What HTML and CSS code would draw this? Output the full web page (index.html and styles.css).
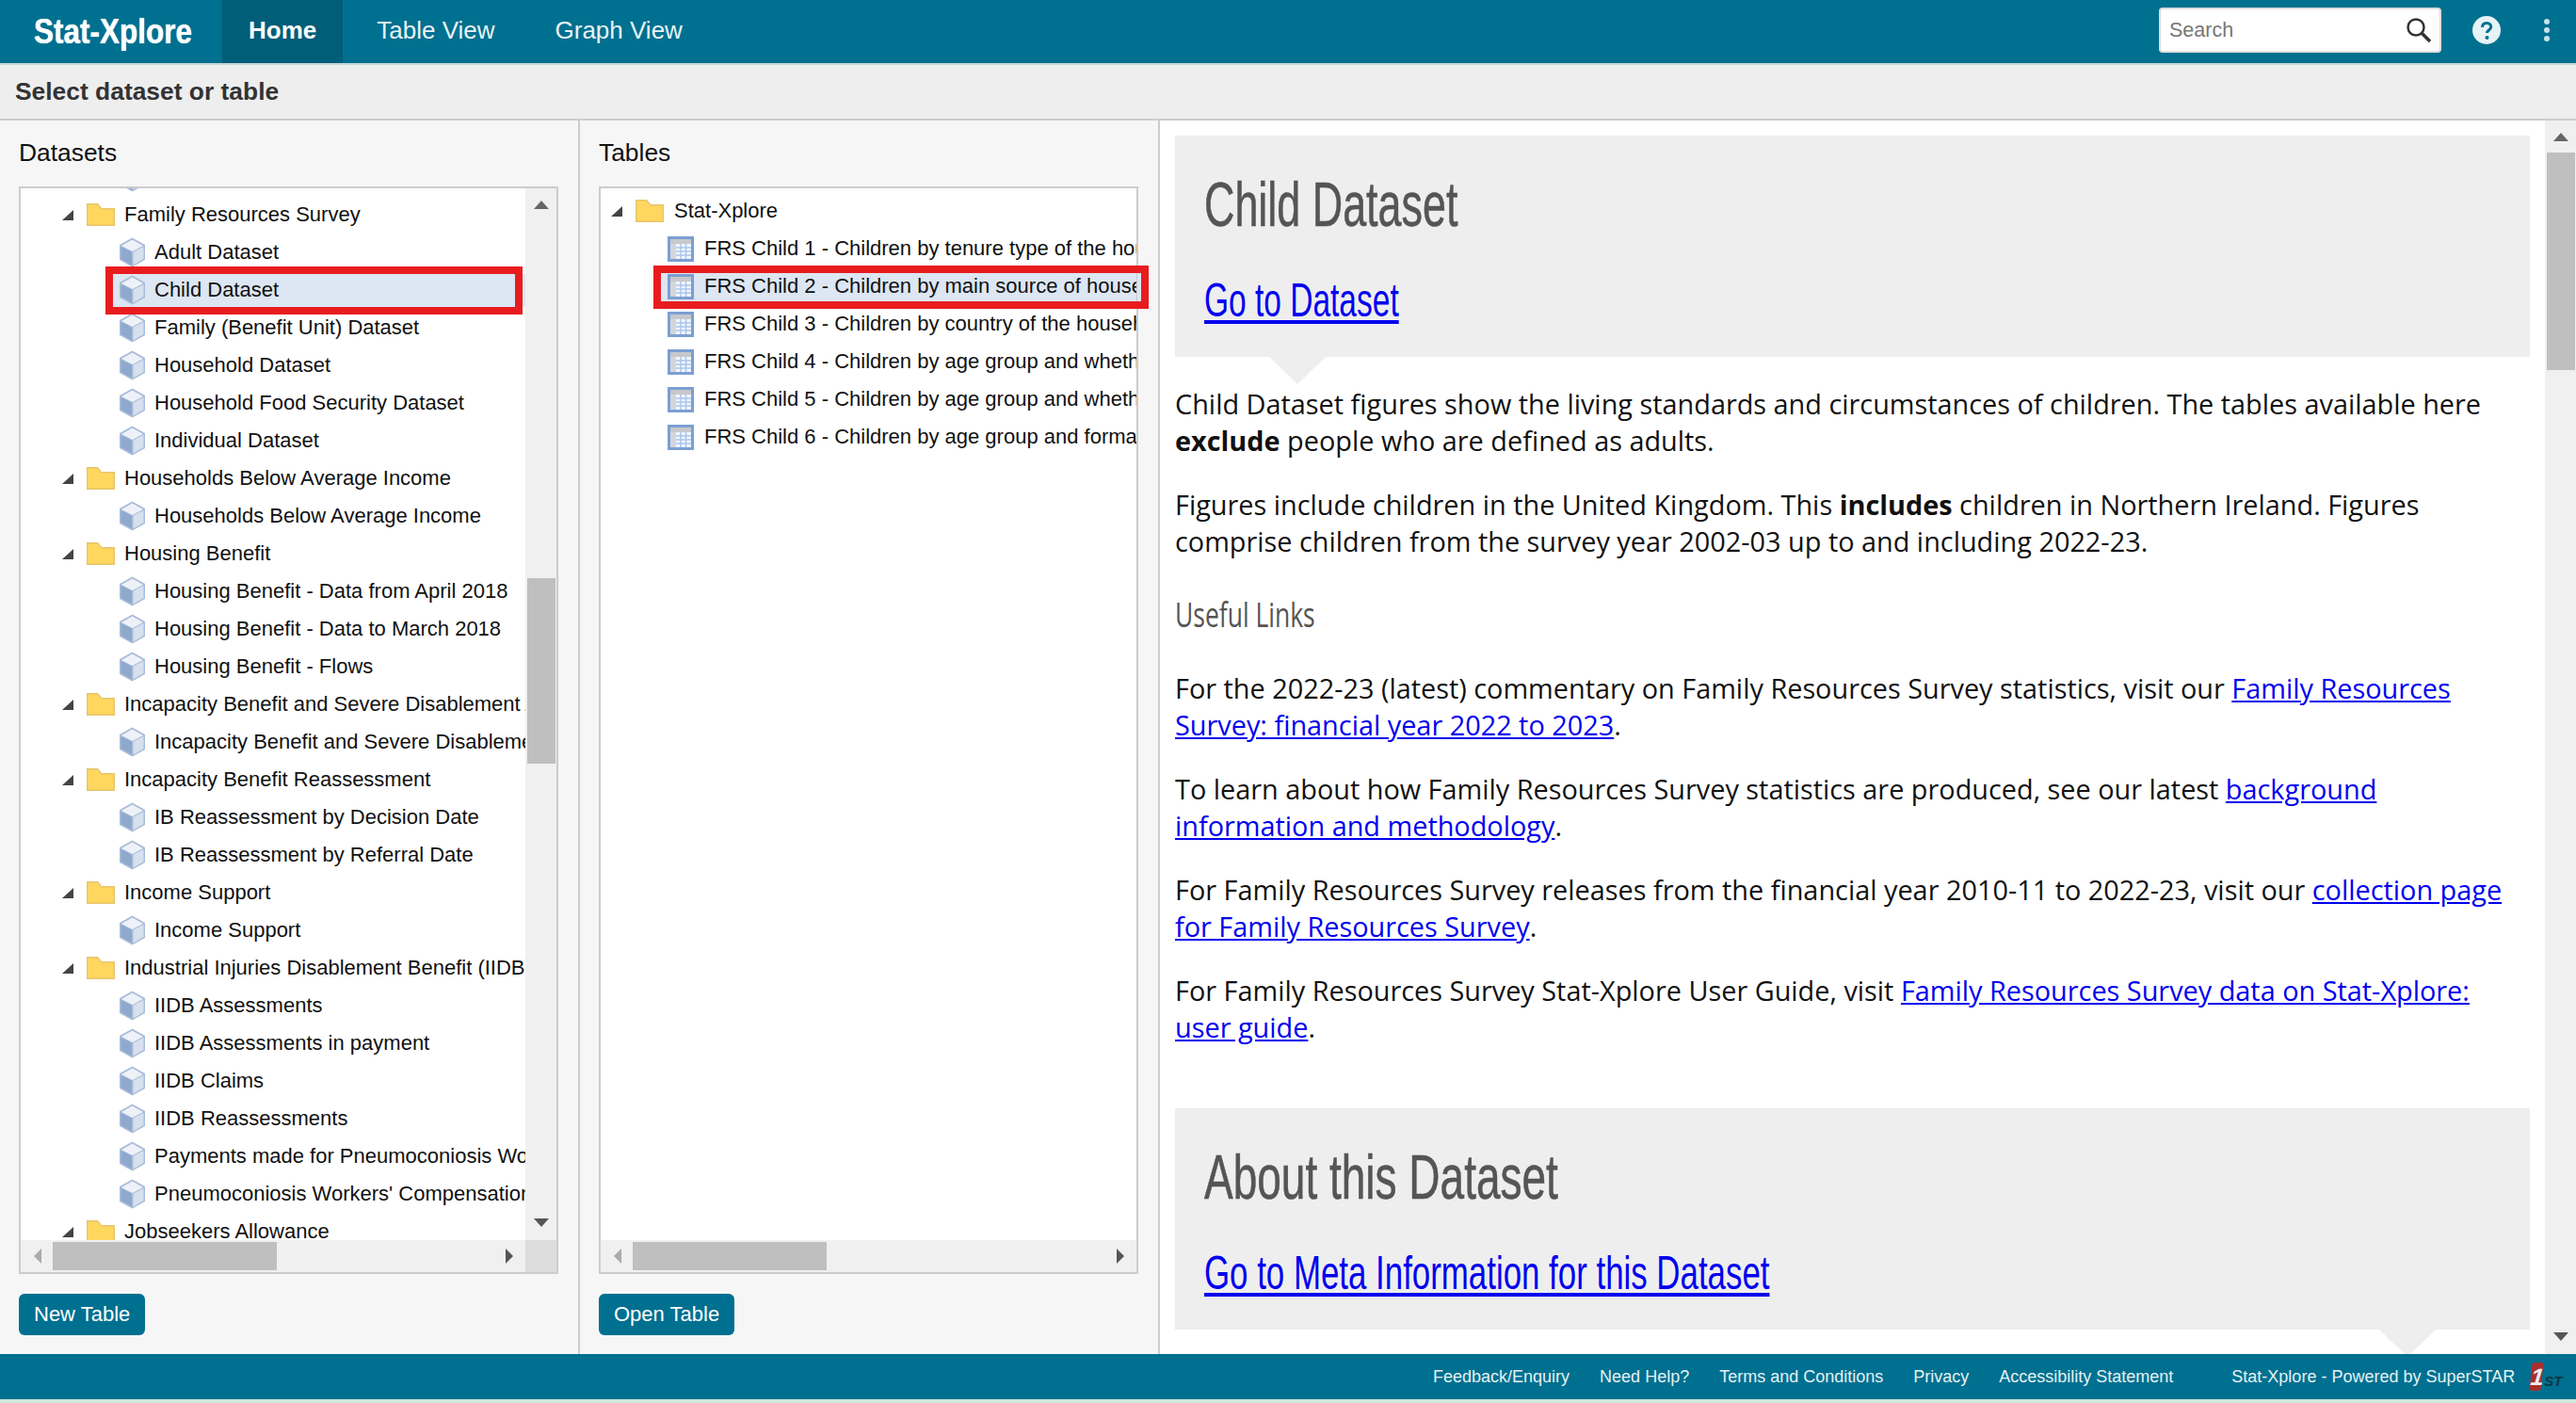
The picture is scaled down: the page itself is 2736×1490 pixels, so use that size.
FILE: index.html
```html
<!DOCTYPE html>
<html lang="en">
  <head>
    <meta charset="UTF-8" />
    <title>Stat-Xplore</title>
    <link rel="stylesheet" href="styles.css">
  </head>
  <body>
    <svg class="defs" width="0" height="0">
      <symbol id="cube" viewBox="0 0 29 32">
        <path d="M14.500 .5 28 8v16l-13.500 7.500L1 24V8z" fill="#a9bcd8"/>
        <path d="M14.500 2.500 26 9l-11.500 6L3 9z" fill="#eef2f8"/>
        <path d="M15.500 15.500 26.500 10v13l-11 6.500z" fill="#d6e0ee"/>
        <path d="M2.500 10l11.500 5.500v14L2.500 23z" fill="#8fa9cd"/>
      </symbol>
      <symbol id="folder" viewBox="0 0 30 24">
        <path d="M0 0h12l4 5h14v19H0z" fill="#e6c56c"/>
        <path d="M1.500 1.500h10l4 5h13v16h-27z" fill="#ffd75f"/>
      </symbol>
      <symbol id="grid" viewBox="0 0 28 27">
        <rect width="28" height="27" fill="#7b9fd2"/>
        <rect x="3" y="3" width="22" height="21" fill="#f2f6fc"/>
        <rect x="3" y="3" width="22" height="5" fill="#c6c8cc"/>
        <rect x="3" y="8" width="6" height="16" fill="#d4d6da"/>
        <path d="M14 8v16M19.500 8v16M9 12h16M9 16h16M9 20h16" stroke="#a9c6ee" stroke-width="1.500" fill="none"/>
      </symbol>
    </svg>

    <header class="topbar">
      <div class="logo"><span>Stat-Xplore</span></div>
      <nav class="tabs">
        <a class="tab tab-active">Home</a>
        <a class="tab">Table View</a>
        <a class="tab">Graph View</a>
      </nav>
      <div class="search">
        <input type="text" placeholder="Search" />
        <svg width="28" height="28" viewBox="0 0 28 28"><circle cx="11" cy="11" r="8.500" fill="none" stroke="#333" stroke-width="2.500"/><path d="M17 17l9 9" stroke="#333" stroke-width="3.500"/></svg>
      </div>
      <svg class="help" width="30" height="30" viewBox="0 0 30 30"><circle cx="15" cy="15" r="15" fill="#e6f2f5"/><path d="M10.500 12c0-3 2-4.500 4.700-4.500s4.500 1.700 4.500 4c0 3.500-4.200 3.500-4.200 6.500" fill="none" stroke="#00708f" stroke-width="3"/><circle cx="15.500" cy="23" r="2" fill="#00708f"/></svg>
      <div class="dots"><i></i><i></i><i></i></div>
    </header>

    <div class="subbar">Select dataset or table</div>

    <main class="columns">
      <section class="panel panel-datasets">
        <h2>Datasets</h2>
        <div class="treebox">
          <div class="tree-row">
            <div class="tree-view tree-view-datasets">
              <ul class="tree" id="datasetTree"></ul>
            </div>
            <div class="vscroll">
              <i class="arrow arrow-up"></i>
              <div class="vtrack"><div class="vthumb"></div></div>
              <i class="arrow arrow-down"></i>
            </div>
          </div>
          <div class="hscroll">
            <i class="arrow arrow-left"></i>
            <div class="htrack"><div class="hthumb hthumb-datasets"></div></div>
            <i class="arrow arrow-right"></i>
            <div class="corner"></div>
          </div>
        </div>
        <div class="mark mark-datasets"></div>
        <button class="btn">New Table</button>
      </section>

      <section class="panel panel-tables">
        <h2>Tables</h2>
        <div class="treebox">
          <div class="tree-row">
            <div class="tree-view tree-view-tables">
              <ul class="tree" id="tableTree"></ul>
            </div>
          </div>
          <div class="hscroll">
            <i class="arrow arrow-left"></i>
            <div class="htrack"><div class="hthumb hthumb-tables"></div></div>
            <i class="arrow arrow-right"></i>
          </div>
        </div>
        <div class="mark mark-tables"></div>
        <button class="btn">Open Table</button>
      </section>

      <section class="detail">
        <div class="detail-body">
          <div class="callout callout-first">
            <h1><span>Child Dataset</span></h1>
            <a class="callout-link" href="#"><span>Go to Dataset</span></a>
          </div>
          <p>Child Dataset figures show the living standards and circumstances of children. The tables available here <b>exclude</b> people who are defined as adults.</p>
          <p>Figures include children in the United Kingdom. This <b>includes</b> children in Northern Ireland. Figures comprise children from the survey year 2002-03 up to and including 2022-23.</p>
          <h3><span>Useful Links</span></h3>
          <p>For the 2022-23 (latest) commentary on Family Resources Survey statistics, visit our <a href="#">Family Resources Survey: financial year 2022 to 2023</a>.</p>
          <p>To learn about how Family Resources Survey statistics are produced, see our latest <a href="#">background information and methodology</a>.</p>
          <p>For Family Resources Survey releases from the financial year 2010-11 to 2022-23, visit our <a href="#">collection page for Family Resources Survey</a>.</p>
          <p>For Family Resources Survey Stat-Xplore User Guide, visit <a href="#">Family Resources Survey data on Stat-Xplore: user guide</a>.</p>
          <div class="callout callout-second">
            <h1><span>About this Dataset</span></h1>
            <a class="callout-link" href="#"><span>Go to Meta Information for this Dataset</span></a>
          </div>
        </div>
        <div class="vscroll vscroll-page">
          <i class="arrow arrow-up"></i>
          <div class="vtrack"><div class="vthumb"></div></div>
          <i class="arrow arrow-down"></i>
        </div>
      </section>
    </main>

    <footer class="footer">
      <a>Feedback/Enquiry</a>
      <a>Need Help?</a>
      <a>Terms and Conditions</a>
      <a>Privacy</a>
      <a>Accessibility Statement</a>
      <span class="powered">Stat-Xplore - Powered by SuperSTAR</span>
      <span class="footer-logo"><b>1</b><i>ST</i></span>
    </footer>
    <div class="strip"></div>

    <script>
      // [level, label]; level 0 is a folder, 1 a leaf
      const datasets = [
        [1, ""],
        [0, "Family Resources Survey"],
        [1, "Adult Dataset"],
        [1, "Child Dataset", true],
        [1, "Family (Benefit Unit) Dataset"],
        [1, "Household Dataset"],
        [1, "Household Food Security Dataset"],
        [1, "Individual Dataset"],
        [0, "Households Below Average Income"],
        [1, "Households Below Average Income"],
        [0, "Housing Benefit"],
        [1, "Housing Benefit - Data from April 2018"],
        [1, "Housing Benefit - Data to March 2018"],
        [1, "Housing Benefit - Flows"],
        [0, "Incapacity Benefit and Severe Disablement Allowance"],
        [1, "Incapacity Benefit and Severe Disablement Allowance"],
        [0, "Incapacity Benefit Reassessment"],
        [1, "IB Reassessment by Decision Date"],
        [1, "IB Reassessment by Referral Date"],
        [0, "Income Support"],
        [1, "Income Support"],
        [0, "Industrial Injuries Disablement Benefit (IIDB)"],
        [1, "IIDB Assessments"],
        [1, "IIDB Assessments in payment"],
        [1, "IIDB Claims"],
        [1, "IIDB Reassessments"],
        [1, "Payments made for Pneumoconiosis Workers"],
        [1, "Pneumoconiosis Workers' Compensation"],
        [0, "Jobseekers Allowance"],
      ];

      const tables = [
        [0, "Stat-Xplore"],
        [1, "FRS Child 1 - Children by tenure type of the household"],
        [1, "FRS Child 2 - Children by main source of household income", true],
        [1, "FRS Child 3 - Children by country of the household"],
        [1, "FRS Child 4 - Children by age group and whether"],
        [1, "FRS Child 5 - Children by age group and whether"],
        [1, "FRS Child 6 - Children by age group and formal"],
      ];

      function fillTree(id, rows, leafIcon) {
        const list = document.getElementById(id);
        rows.forEach(([level, label, selected]) => {
          const li = document.createElement("li");
          li.className = level === 0 ? "node node-folder" : "node node-leaf";
          if (selected) li.classList.add("node-selected");
          const icon = level === 0 ? "folder" : leafIcon;
          const toggle = level === 0 ? '<i class="toggle"></i>' : "";
          li.innerHTML = `${toggle}<svg class="icon icon-${icon}"><use href="#${icon}"/></svg><span>${label}</span>`;
          list.appendChild(li);
        });
      }

      fillTree("datasetTree", datasets, "cube");
      fillTree("tableTree", tables, "grid");
    </script>
  </body>
</html>
```

FILE: styles.css
```css
* {
  box-sizing: border-box;
}

body {
  margin: 0;
  display: flex;
  flex-direction: column;
  height: 1490px;
  overflow: hidden;
  font-family: "Liberation Sans", Arial, sans-serif;
  background-color: #f6f6f6;
  color: #111;
}

.defs {
  position: absolute;
}

/* top bar */
.topbar {
  display: flex;
  align-items: center;
  flex: 0 0 69px;
  background-color: #007090;
  border-bottom: 2px solid #c6d6db;
  color: #e8f3f5;
}

.logo {
  flex: 0 0 236px;
  padding-left: 36px;
  font-size: 36px;
  font-weight: bold;
  color: #fff;
  white-space: nowrap;
  text-shadow: 0 0 1px #fff;
}

.logo span {
  display: inline-block;
  transform: scaleX(0.875);
  transform-origin: left center;
}

.tabs {
  display: flex;
  gap: 8px;
  height: 100%;
}

.tab {
  display: flex;
  align-items: center;
  padding: 0 28px 2px;
  font-size: 26px;
}

.tab-active {
  background-color: #005e78;
  color: #fff;
  font-weight: bold;
}

.search {
  display: flex;
  align-items: center;
  justify-content: space-between;
  flex: 0 0 300px;
  height: 48px;
  margin: 0 0 3px auto;
  padding: 0 8px 0 9px;
  background-color: #fff;
  border: 2px solid #ddd;
  border-radius: 4px;
}

.search input {
  width: 220px;
  border: none;
  outline: none;
  padding: 0;
  font-family: inherit;
  font-size: 21.500px;
}

.search input::placeholder {
  color: #777;
}

.help {
  flex: none;
  margin: 0 0 3px 33px;
}

.dots {
  display: flex;
  flex-direction: column;
  gap: 3px;
  margin: 0 28px 3px 46px;
}

.dots i {
  display: block;
  width: 6px;
  height: 6px;
  border-radius: 50%;
  background-color: #c6e2ea;
}

.subbar {
  flex: 0 0 59px;
  padding: 13px 16px 0;
  background-color: #eee;
  border-bottom: 2px solid #ccc;
  font-size: 26.400px;
  font-weight: bold;
  color: #333;
}

/* three columns */
.columns {
  display: flex;
  flex: 1;
  min-height: 0;
}

.panel {
  position: relative;
  display: flex;
  flex-direction: column;
  flex: 0 0 616px;
  min-width: 0;
  padding: 0 21px 20px 20px;
  border-right: 2px solid #ccc;
}

.panel h2 {
  margin: 0;
  padding-top: 19px;
  height: 70px;
  font-size: 26.400px;
  font-weight: normal;
}

.treebox {
  display: flex;
  flex-direction: column;
  height: 1155px;
  min-width: 0;
  background-color: #fff;
  border: 2px solid #ccc;
}

.tree-row {
  display: flex;
  flex: 1;
  min-height: 0;
}

.tree-view {
  flex: 1;
  min-width: 0;
  overflow: hidden;
}

.tree {
  list-style: none;
  margin: 0;
  padding: 0;
}

.tree-view-datasets .tree {
  margin-top: -32px;
}

.tree-view-tables .tree {
  margin-top: 4px;
}

.node {
  position: relative;
  display: flex;
  align-items: center;
  height: 40px;
  font-size: 22px;
  white-space: nowrap;
}

.node-selected::before {
  content: "";
  position: absolute;
  top: 3px;
  bottom: 2px;
  left: 98px;
  right: 0;
  background-color: #dde6f3;
}

.tree-view-tables .node-selected::before {
  top: 6px;
  bottom: 4px;
  left: 63px;
}

.node > * {
  position: relative;
}

.toggle {
  width: 0;
  height: 0;
  border-style: solid;
  border-width: 0 0 11px 12px;
  border-color: transparent transparent #444 transparent;
}

.icon {
  flex: none;
}

.icon-folder {
  width: 30px;
  height: 24px;
}

.icon-cube {
  width: 29px;
  height: 32px;
}

.icon-grid {
  width: 28px;
  height: 27px;
}

.tree-view-datasets .node-folder {
  padding-left: 44px;
}

.tree-view-tables .node-folder {
  padding-left: 11px;
}

.node-folder .icon {
  margin: 0 11px 0 14px;
}

.tree-view-datasets .node-folder .icon {
  margin-right: 10px;
}

.tree-view-datasets .node-leaf {
  padding-left: 104px;
}

.tree-view-datasets .node-leaf .icon {
  margin-right: 9px;
}

.tree-view-tables .node-leaf {
  padding-left: 71px;
}

.tree-view-tables .node-leaf .icon {
  margin-right: 11px;
}

/* scrollbars */
.vscroll {
  display: flex;
  flex-direction: column;
  align-items: center;
  flex: 0 0 33px;
  background-color: #f0f0f0;
}

.vtrack {
  flex: 1;
  width: 100%;
  padding: 0 1px 0 2px;
}

.vscroll > .arrow-up {
  margin-top: 13px;
}

.vscroll > .arrow-down {
  margin-bottom: 14px;
}

.tree-row .vtrack {
  padding-top: 392px;
}

.vthumb {
  width: 100%;
  background-color: #bfbfbf;
}

.tree-row .vthumb {
  height: 197px;
}

.hscroll {
  display: flex;
  align-items: center;
  flex: 0 0 34px;
  background-color: #f0f0f0;
}

.htrack {
  flex: 1;
  height: 30px;
}

.hthumb {
  height: 100%;
  background-color: #bfbfbf;
}

.hthumb-datasets {
  width: 238px;
}

.hthumb-tables {
  width: 206px;
}

.corner {
  flex: 0 0 33px;
  height: 100%;
  background-color: #ddd;
}

.arrow {
  display: block;
  flex: none;
  width: 0;
  height: 0;
  border-style: solid;
  border-color: transparent;
}

.arrow-up {
  border-width: 0 8px 9px;
  border-bottom-color: #666;
}

.arrow-down {
  border-width: 9px 8px 0;
  border-top-color: #555;
}

.arrow-left {
  border-width: 8px 8px 8px 0;
  border-right-color: #aaa;
  margin: 0 12px 0 14px;
}

.arrow-right {
  border-width: 8px 0 8px 8px;
  border-left-color: #555;
  margin: 0 13px 0 12px;
}

/* red annotation boxes drawn over the screenshot */
.mark {
  position: absolute;
  border: 8px solid #e81c1f;
}

.mark-datasets {
  left: 112px;
  top: 155px;
  width: 443px;
  height: 51px;
}

.mark-tables {
  left: 78px;
  top: 154px;
  width: 526px;
  height: 46px;
  box-shadow: inset -4px 0 0 #dde6f3;
}

.btn {
  align-self: flex-start;
  height: 44px;
  margin-top: 21px;
  padding: 0 16px;
  border: none;
  border-radius: 6px;
  background-color: #007090;
  color: #fff;
  font-family: inherit;
  font-size: 22px;
}

/* right hand detail */
.detail {
  display: flex;
  flex: 1;
  min-width: 0;
  background-color: #fff;
}

.detail-body {
  flex: 1;
  min-width: 0;
  padding: 16px 16px 0;
  overflow: hidden;
  font-family: "Open Sans", sans-serif;
  font-size: 28.850px;
  line-height: 39px;
}

.detail-body p {
  margin: 0 0 29px;
}

.detail-body a {
  color: #0000ee;
}

.callout {
  position: relative;
  height: 235px;
  padding: 0 31px;
  background-color: #eee;
  font-family: "Liberation Sans", sans-serif;
}

.callout::after {
  content: "";
  position: absolute;
  top: 100%;
  border-style: solid;
  border-width: 29px 30px 0;
  border-color: #eee transparent transparent;
}

.callout-first {
  margin-bottom: 30px;
}

.callout-first::after {
  left: 100px;
}

.callout-second {
  margin-top: 67px;
}

.callout-second::after {
  left: 1279px;
}

.callout h1,
.detail-body h3 {
  margin: 0;
  font-weight: normal;
  color: #555;
}

.callout h1 {
  height: 147px;
  padding-top: 38px;
  font-size: 66px;
  line-height: 70px;
  -webkit-text-stroke: 0.6px #555;
}

/* no condensed face is installed, so narrow the headings by hand */
.callout h1 span,
.callout-link span,
.detail-body h3 span {
  display: inline-block;
  transform-origin: left center;
  white-space: nowrap;
}

.callout-first h1 span {
  transform: scaleX(0.68);
}

.callout-second h1 span {
  transform: scaleX(0.697);
}

.callout-link {
  display: block;
  font-size: 50px;
  line-height: 56px;
}

.callout-link span {
  text-decoration: underline;
  text-decoration-thickness: 4px;
  text-underline-offset: 4px;
}

.callout-first .callout-link span {
  transform: scaleX(0.67);
}

.callout-second .callout-link span {
  transform: scaleX(0.697);
}

.detail-body h3 {
  margin: 0 0 29px;
  height: 59px;
  font-size: 36px;
  line-height: 59px;
}

.detail-body h3 span {
  transform: scaleX(0.735);
}

.vscroll-page .vtrack {
  padding-top: 12px;
}

.vscroll-page .vthumb {
  height: 231px;
}

/* footer */
.footer {
  display: flex;
  align-items: center;
  flex: 0 0 48px;
  padding-left: 1522px;
  background-color: #007090;
  color: #e4f1f4;
  font-size: 18px;
  white-space: nowrap;
}

.footer a {
  margin-right: 32px;
}

.powered {
  margin-left: 30px;
}

.footer-logo {
  display: flex;
  align-items: flex-end;
  margin-left: 17px;
  font-style: italic;
  font-weight: bold;
  line-height: 1;
}

.footer-logo b {
  display: block;
  width: 12px;
  height: 30px;
  border-radius: 3px;
  background-color: #a92f2d;
  color: #eee;
  font-size: 25px;
  line-height: 30px;
  text-align: center;
  transform: skewX(-6deg);
}

.footer-logo i {
  margin: 0 0 3px 2px;
  font-size: 15px;
  color: #0b3543;
}

.strip {
  flex: 0 0 4px;
  background-color: #cfe6da;
}
```
